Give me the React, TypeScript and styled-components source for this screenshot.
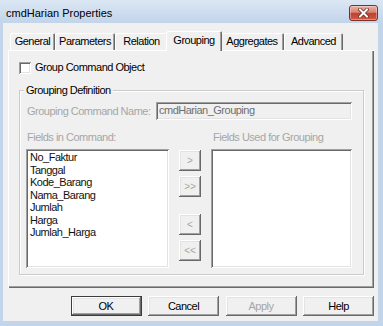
import * as React from 'react';
import styled, { createGlobalStyle } from 'styled-components';

const colors = {
  face: '#f0f0f0',
  light: '#ffffff',
  midLight: '#e3e3e3',
  shadow: '#a0a0a0',
  darkShadow: '#696969',
  disabledText: '#a6a6a6',
  frameTop: '#dce7f4',
  frame: '#c3d5ea',
};

const raised = `
  box-shadow:
    inset -1px -1px 0 ${colors.darkShadow},
    inset 1px 1px 0 ${colors.light},
    inset -2px -2px 0 ${colors.shadow},
    inset 2px 2px 0 ${colors.midLight};
`;

const sunken = `
  box-shadow:
    inset 1px 1px 0 ${colors.shadow},
    inset -1px -1px 0 ${colors.light},
    inset 2px 2px 0 ${colors.darkShadow},
    inset -2px -2px 0 ${colors.midLight};
`;

const GlobalStyle = createGlobalStyle`
  html, body {
    margin: 0;
    padding: 0;
    background: #ffffff;
  }
  body {
    font-family: "Liberation Sans", Arial, sans-serif;
  }
  * {
    box-sizing: border-box;
  }
`;

const Window = styled.div`
  width: 383px;
  height: 326px;
  display: flex;
  flex-direction: column;
  background: linear-gradient(${colors.frameTop}, ${colors.frame} 22px, ${colors.frame});
`;

const TitleBar = styled.div`
  height: 23px;
  display: flex;
  align-items: flex-start;
  justify-content: space-between;
  padding: 0 5px 0 6px;
`;

const Title = styled.span`
  margin-top: 6px;
  font-size: 11px;
  line-height: 15px;
  color: #000;
`;

const CloseButton = styled.button`
  margin-top: 5px;
  width: 29px;
  height: 16px;
  padding: 0;
  border: 1px solid #7d2f25;
  border-radius: 3px;
  background: linear-gradient(#eab0a3 0%, #d88474 45%, #c2402f 52%, #cc5a45 100%);
  box-shadow: inset 0 0 0 1px rgba(255, 255, 255, 0.35);
  display: flex;
  align-items: center;
  justify-content: center;
`;

const Client = styled.div`
  flex: 1;
  margin: 0 5px 5px 3px;
  padding: 0 4px 0 5px;
  background: ${colors.face};
  display: flex;
  flex-direction: column;
  font-size: 11px;
  letter-spacing: -0.5px;
  line-height: 13px;
  color: #000;
`;

const TabStrip = styled.div`
  height: 27px;
  display: flex;
  align-items: flex-end;
  padding-left: 2px;
`;

const Tab = styled.div<{ $width: number; $active?: boolean }>`
  position: relative;
  width: ${({ $width, $active }) => ($active ? $width + 4 : $width)}px;
  height: ${({ $active }) => ($active ? 20 : 17)}px;
  margin: ${({ $active }) => ($active ? '0 -2px -1px -2px' : '0')};
  padding-top: ${({ $active }) => ($active ? 3 : 2)}px;
  z-index: ${({ $active }) => ($active ? 1 : 0)};
  text-align: center;
  background: ${colors.face};
  border-radius: 2px 2px 0 0;
  box-shadow:
    inset 1px 1px 0 ${colors.light},
    inset -1px 0 0 ${colors.darkShadow},
    inset -2px 0 0 ${colors.shadow};
`;

const TabPage = styled.div`
  height: 238px;
  padding: 11px 10px 0 11px;
  box-shadow:
    inset 1px 1px 0 ${colors.light},
    inset -1px -1px 0 ${colors.darkShadow},
    inset -2px -2px 0 ${colors.shadow};
`;

const CheckRow = styled.label`
  display: flex;
  align-items: center;
  gap: 4px;
  height: 13px;
`;

const CheckBox = styled.span`
  width: 12px;
  height: 12px;
  background: #fff;
  ${sunken}
`;

const GroupBox = styled.fieldset`
  margin: 10px 0 0 0;
  padding: 5px 7px 6px 6px;
  border: 1px solid #cacaca;
  box-shadow: inset 1px 1px 0 #fff, 1px 1px 0 #fff;
  min-width: 0;
`;

const Legend = styled.legend`
  padding: 0 2px;
  margin-left: -2px;
  background: ${colors.face};
  line-height: 13px;
`;

const NameRow = styled.div`
  display: grid;
  grid-template-columns: 130px 196px;
  align-items: center;
`;

const FieldLabel = styled.span<{ $indent?: number }>`
  color: ${colors.disabledText};
  padding-left: ${({ $indent }) => $indent ?? 1}px;
  white-space: nowrap;
`;

const ReadonlyField = styled.div`
  height: 18px;
  padding: 2px 3px;
  color: #6f6f6f;
  background: ${colors.face};
  ${sunken}
`;

const FieldsGrid = styled.div`
  margin-top: 11px;
  display: grid;
  grid-template-columns: 143px 22px 141px;
  grid-template-rows: 13px 119px;
  column-gap: 10px;
  row-gap: 5px;
`;

const ListBox = styled.div`
  background: #fff;
  padding: 2px 4px;
  color: #111;
  line-height: 12.5px;
  ${sunken}
`;

const ArrowColumn = styled.div`
  display: flex;
  flex-direction: column;
  padding-top: 1px;
  gap: 5px;
`;

const ArrowButton = styled.div<{ $gapBefore?: number }>`
  height: 21px;
  margin-top: ${({ $gapBefore }) => $gapBefore ?? 0}px;
  display: flex;
  align-items: center;
  justify-content: center;
  color: ${colors.disabledText};
  font-size: 10px;
  letter-spacing: 0;
  background: ${colors.face};
  ${raised}
`;

const ButtonRow = styled.div`
  margin-top: 8px;
  display: flex;
  justify-content: flex-end;
  gap: 6.5px;
`;

const DialogButton = styled.div<{ $isDefault?: boolean; $disabled?: boolean }>`
  width: 71px;
  height: 20px;
  display: flex;
  align-items: center;
  justify-content: center;
  color: ${({ $disabled }) => ($disabled ? colors.disabledText : '#000')};
  background: ${colors.face};
  border: ${({ $isDefault }) => ($isDefault ? '1px solid #3c3c3c' : 'none')};
  ${raised}
`;

const tabs = [
  { label: 'General', width: 45 },
  { label: 'Parameters', width: 60 },
  { label: 'Relation', width: 53 },
  { label: 'Grouping', width: 52, active: true },
  { label: 'Aggregates', width: 64 },
  { label: 'Advanced', width: 59 },
];

const fields = ['No_Faktur', 'Tanggal', 'Kode_Barang', 'Nama_Barang', 'Jumlah', 'Harga', 'Jumlah_Harga'];

export default function App() {
  return (
    <>
      <GlobalStyle />
      <Window>
        <TitleBar>
          <Title>cmdHarian Properties</Title>
          <CloseButton aria-label="Close">
            <svg width="11" height="10" viewBox="0 0 11 10">
              <path d="M2 1.5 L9 8.5 M9 1.5 L2 8.5" stroke="#6a1d14" strokeWidth="3.4" strokeLinecap="square" />
              <path d="M2 1.5 L9 8.5 M9 1.5 L2 8.5" stroke="#ffffff" strokeWidth="2" strokeLinecap="square" />
            </svg>
          </CloseButton>
        </TitleBar>
        <Client>
          <TabStrip>
            {tabs.map((t) => (
              <Tab key={t.label} $width={t.width} $active={t.active}>
                {t.label}
              </Tab>
            ))}
          </TabStrip>
          <TabPage>
            <CheckRow>
              <CheckBox />
              <span>Group Command Object</span>
            </CheckRow>
            <GroupBox>
              <Legend>Grouping Definition</Legend>
              <NameRow>
                <FieldLabel>Grouping Command Name:</FieldLabel>
                <ReadonlyField>cmdHarian_Grouping</ReadonlyField>
              </NameRow>
              <FieldsGrid>
                <FieldLabel>Fields in Command:</FieldLabel>
                <span />
                <FieldLabel $indent={2}>Fields Used for Grouping</FieldLabel>
                <ListBox>
                  {fields.map((f) => (
                    <div key={f}>{f}</div>
                  ))}
                </ListBox>
                <ArrowColumn>
                  <ArrowButton>&gt;</ArrowButton>
                  <ArrowButton>&gt;&gt;</ArrowButton>
                  <ArrowButton $gapBefore={12}>&lt;</ArrowButton>
                  <ArrowButton>&lt;&lt;</ArrowButton>
                </ArrowColumn>
                <ListBox />
              </FieldsGrid>
            </GroupBox>
          </TabPage>
          <ButtonRow>
            <DialogButton $isDefault>OK</DialogButton>
            <DialogButton>Cancel</DialogButton>
            <DialogButton $disabled>Apply</DialogButton>
            <DialogButton>Help</DialogButton>
          </ButtonRow>
        </Client>
      </Window>
    </>
  );
}
